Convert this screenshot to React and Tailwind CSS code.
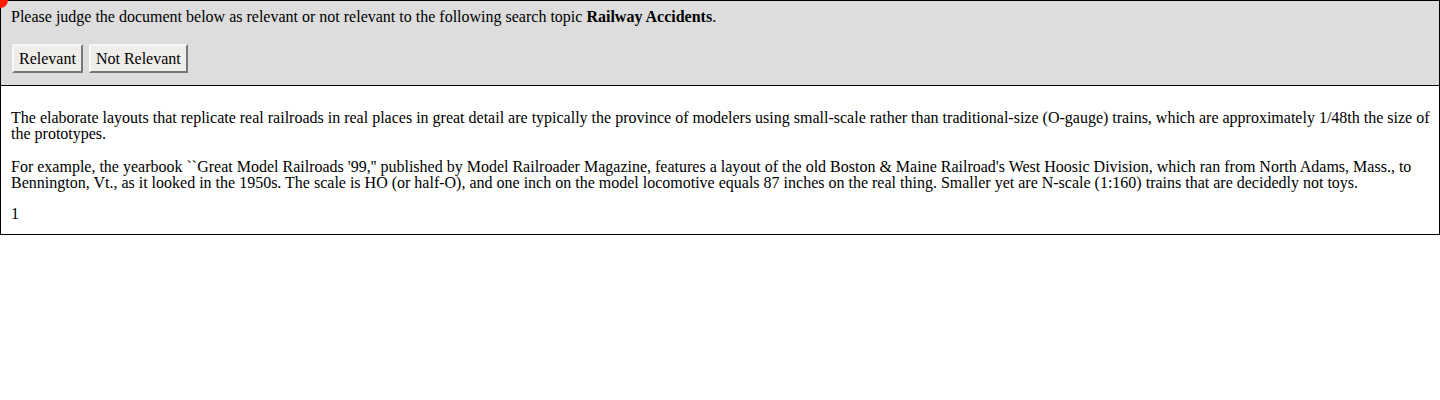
import React from 'react';

const JudgeButton = ({ children }) => (
    <button className="h-[29px] px-[5px] bg-[#efede9] border-2 border-t-[#f7f7f7] border-l-[#f7f7f7] border-r-[#777] border-b-[#777] text-[16px] leading-none text-black">
        {children}
    </button>
);

const App = () => {
    return (
        <div className="relative w-[1440px] font-['Liberation_Serif',serif] text-black">
            <div className="absolute -left-[8px] -top-[8px] h-[16px] w-[16px] rounded-full bg-[#ff1a00]"></div>
            <div className="border border-black">
                <div className="bg-[#dddddd] border-b border-black px-[10px] pt-[8px] pb-[12px]">
                    <p className="text-[16px] leading-[16px]">
                        Please judge the document below as relevant or not relevant to the following search topic <b>Railway Accidents</b>.
                    </p>
                    <div className="mt-[19px] flex gap-[6px] pl-[1px]">
                        <JudgeButton>Relevant</JudgeButton>
                        <JudgeButton>Not Relevant</JudgeButton>
                    </div>
                </div>
                <div className="bg-white pl-[10px] pr-[2px] pt-[24px] pb-[12px] text-[16px] leading-[16px]">
                    <p className="mb-[17px]">
                        The elaborate layouts that replicate real railroads in real places in great detail are typically the province of modelers using small-scale rather than traditional-size (O-gauge) trains, which are approximately 1/48th the size of the prototypes.
                    </p>
                    <p className="mb-[15px] pr-[8px]">
                        For example, the yearbook ``Great Model Railroads '99,'' published by Model Railroader Magazine, features a layout of the old Boston &amp; Maine Railroad's West Hoosic Division, which ran from North Adams, Mass., to Bennington, Vt., as it looked in the 1950s. The scale is HO (or half-O), and one inch on the model locomotive equals 87 inches on the real thing. Smaller yet are N-scale (1:160) trains that are decidedly not toys.
                    </p>
                    <p>1</p>
                </div>
            </div>
        </div>
    );
};

export default App;
